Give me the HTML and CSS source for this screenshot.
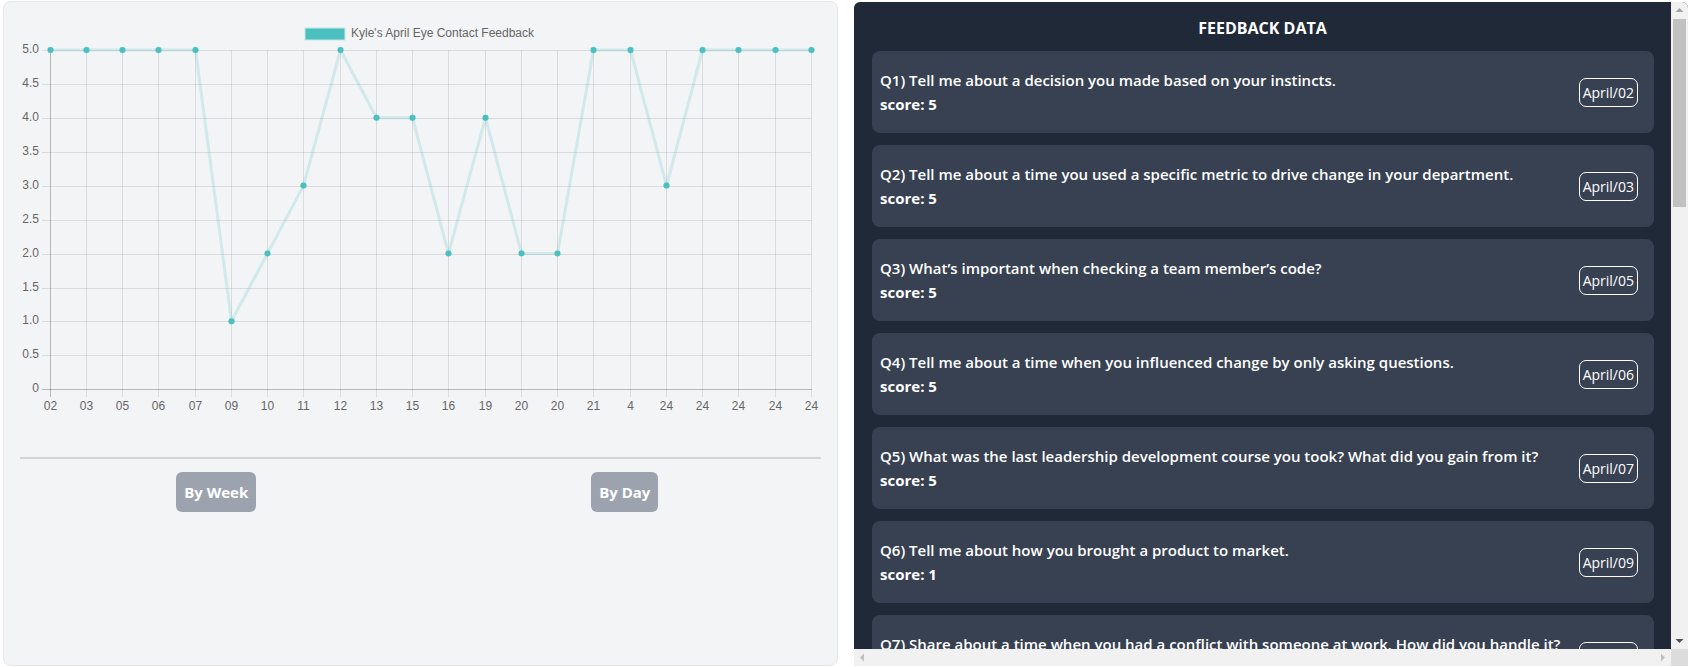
FILE: index.html
```html
<!DOCTYPE html>
<html lang="en">
<head>
<meta charset="utf-8">
<title>Feedback</title>
<link rel="stylesheet" href="styles.css">
</head>
<body>
<div class="page">
  <section class="chart-card">
    <svg class="chart" width="833" height="428" viewBox="4 2 833 428" xmlns="http://www.w3.org/2000/svg">
      <g class="legend">
        <rect x="305.5" y="28.5" width="39" height="11" fill="#4bc0c0" stroke="rgba(75,192,192,0.25)" stroke-width="2"/>
        <text x="351" y="34" class="lbl" dominant-baseline="middle">Kyle's April Eye Contact Feedback</text>
      </g>
      <g class="grid" stroke="rgba(0,0,0,0.1)" stroke-width="1">
        <line x1="42" y1="50.5" x2="811" y2="50.5"/>
        <line x1="42" y1="84.5" x2="811" y2="84.5"/>
        <line x1="42" y1="118.5" x2="811" y2="118.5"/>
        <line x1="42" y1="152.5" x2="811" y2="152.5"/>
        <line x1="42" y1="186.5" x2="811" y2="186.5"/>
        <line x1="42" y1="220.5" x2="811" y2="220.5"/>
        <line x1="42" y1="254.5" x2="811" y2="254.5"/>
        <line x1="42" y1="288.5" x2="811" y2="288.5"/>
        <line x1="42" y1="321.5" x2="811" y2="321.5"/>
        <line x1="42" y1="355.5" x2="811" y2="355.5"/>
        <line x1="86.5" y1="50" x2="86.5" y2="397"/>
        <line x1="122.5" y1="50" x2="122.5" y2="397"/>
        <line x1="158.5" y1="50" x2="158.5" y2="397"/>
        <line x1="195.5" y1="50" x2="195.5" y2="397"/>
        <line x1="231.5" y1="50" x2="231.5" y2="397"/>
        <line x1="267.5" y1="50" x2="267.5" y2="397"/>
        <line x1="303.5" y1="50" x2="303.5" y2="397"/>
        <line x1="340.5" y1="50" x2="340.5" y2="397"/>
        <line x1="376.5" y1="50" x2="376.5" y2="397"/>
        <line x1="412.5" y1="50" x2="412.5" y2="397"/>
        <line x1="448.5" y1="50" x2="448.5" y2="397"/>
        <line x1="485.5" y1="50" x2="485.5" y2="397"/>
        <line x1="521.5" y1="50" x2="521.5" y2="397"/>
        <line x1="557.5" y1="50" x2="557.5" y2="397"/>
        <line x1="593.5" y1="50" x2="593.5" y2="397"/>
        <line x1="630.5" y1="50" x2="630.5" y2="397"/>
        <line x1="666.5" y1="50" x2="666.5" y2="397"/>
        <line x1="702.5" y1="50" x2="702.5" y2="397"/>
        <line x1="738.5" y1="50" x2="738.5" y2="397"/>
        <line x1="775.5" y1="50" x2="775.5" y2="397"/>
        <line x1="811.5" y1="50" x2="811.5" y2="397"/>
      </g>
      <g stroke="rgba(0,0,0,0.25)" stroke-width="1">
        <line x1="42" y1="389.5" x2="812" y2="389.5"/>
        <line x1="50.5" y1="50" x2="50.5" y2="397"/>
      </g>
      <g class="lbl" text-anchor="end" dominant-baseline="middle">
        <text x="39" y="50">5.0</text>
        <text x="39" y="84">4.5</text>
        <text x="39" y="118">4.0</text>
        <text x="39" y="152">3.5</text>
        <text x="39" y="186">3.0</text>
        <text x="39" y="220">2.5</text>
        <text x="39" y="254">2.0</text>
        <text x="39" y="288">1.5</text>
        <text x="39" y="321">1.0</text>
        <text x="39" y="355">0.5</text>
        <text x="39" y="389">0</text>
      </g>
      <g class="lbl" text-anchor="middle" dominant-baseline="middle">
        <text x="50.5" y="407">02</text>
        <text x="86.5" y="407">03</text>
        <text x="122.5" y="407">05</text>
        <text x="158.5" y="407">06</text>
        <text x="195.5" y="407">07</text>
        <text x="231.5" y="407">09</text>
        <text x="267.5" y="407">10</text>
        <text x="303.5" y="407">11</text>
        <text x="340.5" y="407">12</text>
        <text x="376.5" y="407">13</text>
        <text x="412.5" y="407">15</text>
        <text x="448.5" y="407">16</text>
        <text x="485.5" y="407">19</text>
        <text x="521.5" y="407">20</text>
        <text x="557.5" y="407">20</text>
        <text x="593.5" y="407">21</text>
        <text x="630.5" y="407">4</text>
        <text x="666.5" y="407">24</text>
        <text x="702.5" y="407">24</text>
        <text x="738.5" y="407">24</text>
        <text x="775.5" y="407">24</text>
        <text x="811.5" y="407">24</text>
      </g>
      <polyline fill="none" stroke="rgba(75,192,192,0.2)" stroke-width="3" stroke-linejoin="round"
        points="50.5,50 86.5,50 122.5,50 158.5,50 195.5,50 231.5,321.2 267.5,253.4 303.5,185.6 340.5,50 376.5,117.8 412.5,117.8 448.5,253.4 485.5,117.8 521.5,253.4 557.5,253.4 593.5,50 630.5,50 666.5,185.6 702.5,50 738.5,50 775.5,50 811.5,50"/>
      <g fill="#4bc0c0" stroke="rgba(75,192,192,0.2)" stroke-width="1">
        <circle cx="50.5" cy="50" r="3"/>
        <circle cx="86.5" cy="50" r="3"/>
        <circle cx="122.5" cy="50" r="3"/>
        <circle cx="158.5" cy="50" r="3"/>
        <circle cx="195.5" cy="50" r="3"/>
        <circle cx="231.5" cy="321.2" r="3"/>
        <circle cx="267.5" cy="253.4" r="3"/>
        <circle cx="303.5" cy="185.6" r="3"/>
        <circle cx="340.5" cy="50" r="3"/>
        <circle cx="376.5" cy="117.8" r="3"/>
        <circle cx="412.5" cy="117.8" r="3"/>
        <circle cx="448.5" cy="253.4" r="3"/>
        <circle cx="485.5" cy="117.8" r="3"/>
        <circle cx="521.5" cy="253.4" r="3"/>
        <circle cx="557.5" cy="253.4" r="3"/>
        <circle cx="593.5" cy="50" r="3"/>
        <circle cx="630.5" cy="50" r="3"/>
        <circle cx="666.5" cy="185.6" r="3"/>
        <circle cx="702.5" cy="50" r="3"/>
        <circle cx="738.5" cy="50" r="3"/>
        <circle cx="775.5" cy="50" r="3"/>
        <circle cx="811.5" cy="50" r="3"/>
      </g>
    </svg>
    <hr class="divider">
    <div class="btn-row">
      <div class="btn-cell"><button class="btn" type="button">By Week</button></div>
      <div class="btn-cell"><button class="btn" type="button">By Day</button></div>
    </div>
  </section>

  <section class="feedback">
    <div class="fb-viewport">
      <h2 class="fb-title">FEEDBACK DATA</h2>
      <div class="fb-list">
        <article class="fb-card"><div class="fb-text"><p class="fb-q">Q1) Tell me about a decision you made based on your instincts.</p><p class="fb-score">score: 5</p></div><span class="fb-date">April/02</span></article>
        <article class="fb-card"><div class="fb-text"><p class="fb-q">Q2) Tell me about a time you used a specific metric to drive change in your department.</p><p class="fb-score">score: 5</p></div><span class="fb-date">April/03</span></article>
        <article class="fb-card"><div class="fb-text"><p class="fb-q">Q3) What’s important when checking a team member’s code?</p><p class="fb-score">score: 5</p></div><span class="fb-date">April/05</span></article>
        <article class="fb-card"><div class="fb-text"><p class="fb-q">Q4) Tell me about a time when you influenced change by only asking questions.</p><p class="fb-score">score: 5</p></div><span class="fb-date">April/06</span></article>
        <article class="fb-card"><div class="fb-text"><p class="fb-q">Q5) What was the last leadership development course you took? What did you gain from it?</p><p class="fb-score">score: 5</p></div><span class="fb-date">April/07</span></article>
        <article class="fb-card"><div class="fb-text"><p class="fb-q">Q6) Tell me about how you brought a product to market.</p><p class="fb-score">score: 1</p></div><span class="fb-date">April/09</span></article>
        <article class="fb-card"><div class="fb-text"><p class="fb-q">Q7) Share about a time when you had a conflict with someone at work. How did you handle it?</p><p class="fb-score">score: 2</p></div><span class="fb-date">April/10</span></article>
        <article class="fb-card"><div class="fb-text"><p class="fb-q">Q8) Tell me about a time you had to deliver bad news to a customer.</p><p class="fb-score">score: 3</p></div><span class="fb-date">April/11</span></article>
        <article class="fb-card"><div class="fb-text"><p class="fb-q">Q9) Describe a project you are most proud of.</p><p class="fb-score">score: 5</p></div><span class="fb-date">April/12</span></article>
        <article class="fb-card"><div class="fb-text"><p class="fb-q">Q10) How do you prioritize when everything is urgent?</p><p class="fb-score">score: 4</p></div><span class="fb-date">April/13</span></article>
      </div>
    </div>
    <div class="vbar">
      <span class="sb-btn"><svg width="17" height="17" viewBox="0 0 17 17"><polygon points="4.5,10 12.5,10 8.5,6" fill="#a3a3a3"/></svg></span>
      <div class="vtrack"><div class="vthumb"></div></div>
      <span class="sb-btn"><svg width="17" height="17" viewBox="0 0 17 17"><polygon points="4.5,7 12.5,7 8.5,11" fill="#505050"/></svg></span>
    </div>
    <div class="hbar">
      <span class="sb-btn"><svg width="17" height="17" viewBox="0 0 17 17"><polygon points="10,4.5 10,12.5 6,8.5" fill="#c1c1c1"/></svg></span>
      <div class="htrack"></div>
      <span class="sb-btn"><svg width="17" height="17" viewBox="0 0 17 17"><polygon points="7,4.5 7,12.5 11,8.5" fill="#c1c1c1"/></svg></span>
    </div>
    <div class="corner"></div>
  </section>
</div>
</body>
</html>
```

FILE: styles.css
```css
html, body {
  margin: 0;
  padding: 0;
  background: #ffffff;
}

.page {
  display: grid;
  grid-template-columns: 835px 834px;
  column-gap: 16px;
  padding: 1px 4px 1px 3px;
  height: 667px;
  box-sizing: border-box;
}

/* ---------- chart card ---------- */
.chart-card {
  background: #f3f4f6;
  border: 1px solid #e5e7eb;
  border-radius: 8px;
  box-sizing: border-box;
  display: flex;
  flex-direction: column;
}

.chart {
  display: block;
}

.lbl {
  font-family: "Liberation Sans", Arial, sans-serif;
  font-size: 12px;
  fill: #666666;
}

.divider {
  margin: 27px 16px 0 16px;
  border: 0;
  border-top: 2px solid #d1d5db;
  height: 0;
}

.btn-row {
  display: grid;
  grid-template-columns: 1fr 1fr;
  margin: 13px 8px 0 8px;
}

.btn-cell {
  display: flex;
  justify-content: center;
}

.btn {
  background: #9ca3af;
  color: #ffffff;
  border: 0;
  border-radius: 6px;
  height: 40px;
  padding: 0 8px;
  font-family: "Open Sans", "Noto Sans", sans-serif;
  font-weight: 700;
  font-size: 15px;
}

/* ---------- feedback panel ---------- */
.feedback {
  background: #1f2937;
  border-radius: 6px 6px 0 0;
  margin-top: 1px;
  overflow: hidden;
  display: grid;
  grid-template-columns: 1fr 17px;
  grid-template-rows: 1fr 17px;
  font-family: "Open Sans", "Noto Sans", sans-serif;
  color: #ffffff;
  min-height: 0;
}

.fb-viewport {
  overflow: hidden;
  min-height: 0;
}

.fb-title {
  margin: 0;
  padding: 14px 0 11px 0;
  text-align: center;
  font-size: 16px;
  font-weight: 700;
  line-height: 24px;
}

.fb-list {
  display: flex;
  flex-direction: column;
  gap: 12px;
  padding: 0 17px 18px 18px;
}

.fb-card {
  background: #374151;
  border-radius: 8px;
  min-height: 82px;
  box-sizing: border-box;
  padding: 16px 16px 16px 8px;
  display: flex;
  align-items: center;
  justify-content: space-between;
  gap: 12px;
}

.fb-q {
  margin: 0;
  font-size: 15px;
  font-weight: 600;
  line-height: 24px;
  white-space: nowrap;
}

.fb-score {
  margin: 0;
  font-size: 15px;
  font-weight: 700;
  line-height: 24px;
}

.fb-date {
  flex: none;
  border: 1px solid #ffffff;
  border-radius: 7px;
  padding: 0 3px;
  font-size: 14px;
  line-height: 27px;
  white-space: nowrap;
}

/* ---------- fake scrollbars ---------- */
.vbar {
  background: #f1f1f1;
  display: flex;
  flex-direction: column;
}

.hbar {
  background: #f1f1f1;
  display: flex;
}

.sb-btn {
  flex: none;
  width: 17px;
  height: 17px;
  display: block;
}

.sb-btn svg {
  display: block;
}

.vtrack {
  flex: 1;
  padding: 0 2px;
}

.vthumb {
  height: 188px;
  background: #c1c1c1;
}

.htrack {
  flex: 1;
}

.corner {
  background: #dcdcdc;
}
```
